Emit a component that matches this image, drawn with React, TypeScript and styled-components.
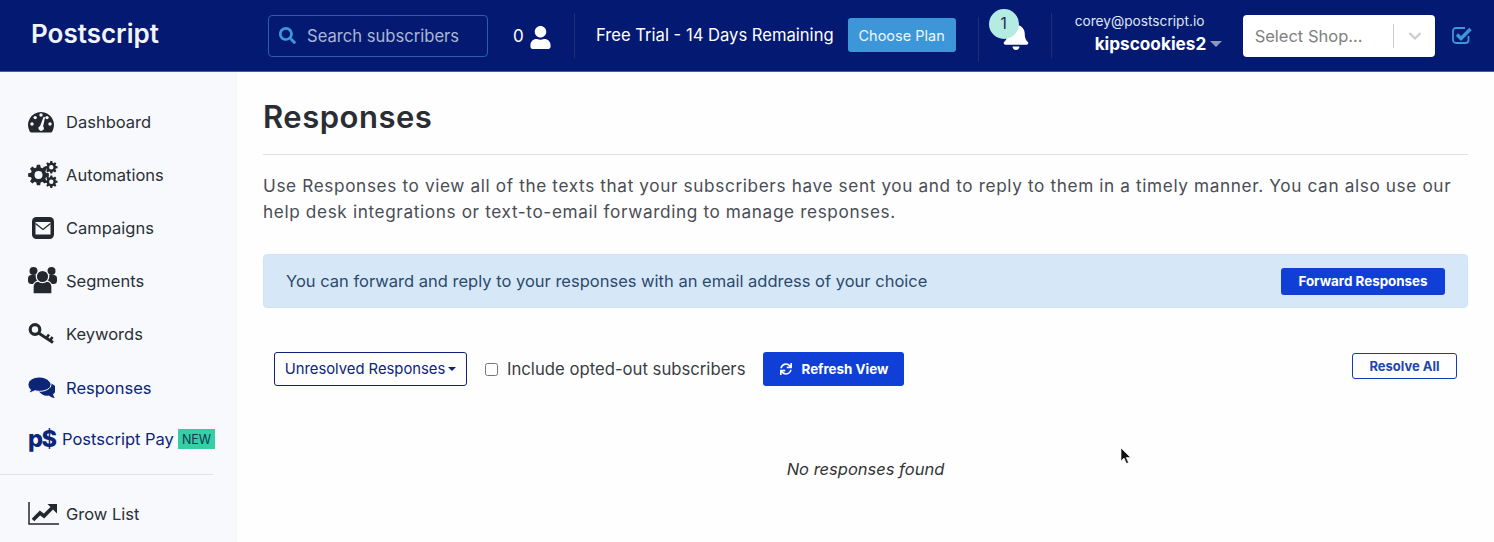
import React from 'react';
import styled, { createGlobalStyle } from 'styled-components';
import { FaBell, FaSearch, FaSync, FaUser } from 'react-icons/fa';

const GlobalStyle = createGlobalStyle`
  html, body {
    margin: 0;
    padding: 0;
    background: #fff;
    overflow: hidden;
  }
  body {
    font-family: Inter, "Liberation Sans", sans-serif;
    color: #212529;
  }
`;

const Page = styled.div`
  position: relative;
  width: 1494px;
  height: 542px;
  overflow: hidden;
`;

const Header = styled.header`
  box-sizing: border-box;
  height: 72px;
  display: flex;
  align-items: center;
  background: #041a72;
  border-bottom: 1px solid #3d62ad;
  color: #fff;
`;

const Logo = styled.div`
  width: 237px;
  padding-left: 31px;
  box-sizing: border-box;
  font-size: 26px;
  font-weight: 600;
  margin-top: -5px;
  color: #f2f4f9;
`;

const SearchBox = styled.div`
  box-sizing: border-box;
  width: 220px;
  height: 42px;
  margin-left: 31px;
  padding-left: 10px;
  display: flex;
  align-items: center;
  gap: 11px;
  border: 1px solid #2c5bb0;
  border-radius: 4px;
  color: #a9b6d6;
  font-size: 16.6px;
  svg {
    color: #3d9ad9;
    font-size: 17px;
  }
`;

const Count = styled.div`
  margin-left: 25px;
  width: 61px;
  display: flex;
  align-items: center;
  gap: 5px;
  font-size: 17px;
  svg {
    font-size: 23px;
    margin-top: 4px;
  }
`;

const Divider = styled.div<{ $left: number; $top?: number }>`
  width: 1px;
  height: 45px;
  margin-left: ${(p) => p.$left}px;
  margin-top: ${(p) => p.$top ?? 0}px;
  background: #1b3079;
`;

const Trial = styled.div`
  margin-left: 21px;
  font-size: 16.6px;
  white-space: nowrap;
  margin-top: -2px;
`;

const PlanButton = styled.div`
  margin-left: 14px;
  width: 108px;
  height: 34px;
  margin-top: -1px;
  border-radius: 3px;
  background: #3d96d8;
  color: #eef6fc;
  display: flex;
  align-items: center;
  justify-content: center;
  font-size: 14.5px;
`;

const BellWrap = styled.div`
  position: relative;
  width: 26px;
  margin-left: 23px;
  margin-top: 1px;
  font-size: 28px;
  line-height: 0;
`;

const BellBadge = styled.span`
  position: absolute;
  left: -13px;
  top: -13px;
  width: 30px;
  height: 30px;
  border-radius: 50%;
  background: #b4ebe2;
  color: #1c2a40;
  font-size: 15.5px;
  line-height: 29px;
  text-align: center;
`;

const Account = styled.div`
  width: 150px;
  margin-left: 23px;
  margin-top: -1px;
  white-space: nowrap;
`;

const Email = styled.div`
  font-size: 13.7px;
  line-height: 18px;
  color: #dfe5f3;
  margin-top: -3px;
`;

const ShopName = styled.div`
  display: flex;
  align-items: center;
  gap: 4px;
  margin-left: 20px;
  margin-top: 3px;
  font-size: 17.2px;
  line-height: 22px;
  font-weight: 700;
`;

const Caret = styled.span<{ $color: string; $size: number }>`
  display: inline-block;
  width: 0;
  height: 0;
  border-left: ${(p) => p.$size}px solid transparent;
  border-right: ${(p) => p.$size}px solid transparent;
  border-top: ${(p) => p.$size}px solid ${(p) => p.$color};
`;

const ShopSelect = styled.div`
  box-sizing: border-box;
  width: 192px;
  height: 42px;
  margin-left: 18px;
  background: #fff;
  border-radius: 4px;
  display: flex;
  align-items: center;
  color: #808080;
  font-size: 16.5px;
  padding-left: 12px;
`;

const ShopLabel = styled.span`
  width: 138px;
  white-space: nowrap;
`;

const ShopSeparator = styled.span`
  width: 1px;
  height: 24px;
  background: #cccccc;
`;

const ShopChevron = styled.svg`
  width: 14px;
  height: 10px;
  margin-left: 14px;
`;

const CheckIcon = styled.svg`
  width: 20px;
  height: 18px;
  margin-left: 17px;
  margin-top: -1px;
`;

const Body = styled.div`
  display: flex;
  height: 470px;
`;

const Sidebar = styled.nav`
  box-sizing: border-box;
  width: 237px;
  flex: none;
  background: #f7f9fd;
  padding-top: 23px;
`;

const NavItem = styled.div<{ $active?: boolean }>`
  height: 53px;
  display: flex;
  align-items: center;
  padding-left: 28px;
  font-size: 16.5px;
  color: ${(p) => (p.$active ? '#0c2577' : '#2b2f36')};
  margin-top: ${(p) => (p.$active ? 1 : 0)}px;
`;

const NavIcon = styled.span`
  width: 38px;
  flex: none;
  line-height: 0;
  color: #24272d;
`;

const NavGlyph = styled.svg<{ $w: number; $h: number; $left?: number }>`
  width: ${(p) => p.$w}px;
  height: ${(p) => p.$h}px;
  margin-left: ${(p) => p.$left ?? 0}px;
`;

const PayRow = styled.div`
  height: 47px;
  display: flex;
  align-items: center;
  padding-left: 28px;
  font-size: 16.5px;
  color: #0c2577;
  white-space: nowrap;
  margin-top: 1px;
`;

const PayLogo = styled.span`
  width: 34px;
  font-size: 23.5px;
  font-weight: 800;
  letter-spacing: -1.5px;
  color: #0c2577;
`;

const NewTag = styled.span`
  margin-left: 4px;
  padding: 0 4px;
  height: 20px;
  line-height: 21px;
  background: #35cfa3;
  color: #0e3a58;
  font-size: 12.5px;
`;

const SideRule = styled.div`
  width: 213px;
  height: 1px;
  background: #dfe3e8;
  margin: 12px 0;
`;

const Main = styled.main`
  box-sizing: border-box;
  flex: 1;
  padding: 23px 26px 0;
  background: #fefefe;
`;

const Title = styled.h1`
  margin: 0;
  height: 59px;
  border-bottom: 1px solid #dee2e6;
  font-size: 31px;
  letter-spacing: 0.5px;
  line-height: 44px;
  font-weight: 600;
  color: #2a2d33;
`;

const Intro = styled.p`
  margin: 18px 0 0;
  font-size: 17.2px;
  letter-spacing: 0.63px;
  line-height: 26px;
  color: #4a4d55;
`;

const Alert = styled.div`
  box-sizing: border-box;
  height: 54px;
  margin-top: 29px;
  padding: 0 22px;
  display: flex;
  align-items: center;
  justify-content: space-between;
  background: #d6e8f8;
  border: 1px solid #d0e3f5;
  border-radius: 4px;
  color: #2c4a6c;
  font-size: 16.5px;
`;

const PrimaryButton = styled.div<{ $width: number; $height: number }>`
  box-sizing: border-box;
  width: ${(p) => p.$width}px;
  height: ${(p) => p.$height}px;
  display: flex;
  align-items: center;
  justify-content: center;
  gap: 10px;
  background: #0f3fd6;
  border-radius: 3px;
  color: #fff;
  font-size: 13.4px;
  font-weight: 700;
  svg {
    font-size: 12px;
  }
`;

const Toolbar = styled.div`
  display: flex;
  align-items: center;
  height: 34px;
  margin-top: 44px;
  padding: 0 11px;
`;

const FilterButton = styled.div`
  box-sizing: border-box;
  width: 193px;
  height: 34px;
  display: flex;
  align-items: center;
  justify-content: center;
  gap: 3px;
  border: 1px solid #0c2577;
  border-radius: 3px;
  color: #0c2577;
  font-size: 14.8px;
`;

const CheckLabel = styled.label`
  margin: 0 18px;
  display: flex;
  align-items: center;
  gap: 9px;
  color: #3a3d44;
  font-size: 16.7px;
  white-space: nowrap;
`;

const CheckBox = styled.span`
  box-sizing: border-box;
  width: 13px;
  height: 13px;
  border: 1px solid #767676;
  border-radius: 2.5px;
  background: #fff;
`;

const ResolveButton = styled.div`
  box-sizing: border-box;
  width: 105px;
  height: 26px;
  margin-left: auto;
  align-self: flex-start;
  margin-top: 1px;
  display: flex;
  align-items: center;
  justify-content: center;
  border: 1px solid #0f3fae;
  border-radius: 3px;
  color: #1d45ae;
  font-size: 13px;
  font-weight: 700;
`;

const Empty = styled.div`
  margin-top: 73px;
  text-align: center;
  font-style: italic;
  font-size: 16.5px;
  color: #333;
  line-height: 20px;
`;

const Pointer = styled.svg`
  position: absolute;
  left: 1120px;
  top: 447px;
  width: 12px;
  height: 19px;
`;

// outline of a toothed gear with a round hole, for the automations icon
function gearPath(cx: number, cy: number, r: number, hole: number, teeth: number) {
  const inner = r * 0.74;
  const step = (Math.PI * 2) / teeth;
  const pts: string[] = [];
  for (let i = 0; i < teeth; i++) {
    const a = i * step;
    const corners: [number, number][] = [
      [inner, a - step * 0.36],
      [r, a - step * 0.2],
      [r, a + step * 0.2],
      [inner, a + step * 0.36],
    ];
    corners.forEach(([rad, ang]) => {
      pts.push(`${(cx + rad * Math.cos(ang)).toFixed(2)} ${(cy + rad * Math.sin(ang)).toFixed(2)}`);
    });
  }
  const ring = `M${cx - hole} ${cy}a${hole} ${hole} 0 1 0 ${hole * 2} 0a${hole} ${hole} 0 1 0 ${-hole * 2} 0z`;
  return `M${pts.join('L')}z${ring}`;
}

const GaugeIcon = () => (
  <NavGlyph $w={26} $h={22} viewBox="0 0 26 22">
    <path d="M3.4 21.5h19.2a2 2 0 0 0 1.7-1A13 13 0 1 0 1.7 20.5a2 2 0 0 0 1.7 1z" fill="currentColor" />
    <g fill="#f7f9fd">
      <circle cx="4" cy="13" r="1.7" />
      <circle cx="7.2" cy="6.6" r="1.7" />
      <circle cx="13" cy="4" r="1.7" />
      <circle cx="22" cy="13" r="1.7" />
      <circle cx="19" cy="6.6" r="1.7" />
      <path d="M15.6 5.8l1.5.5-2 9.2a2.6 2.6 0 1 1-3-.6z" />
    </g>
  </NavGlyph>
);

const CogsIcon = () => (
  <NavGlyph $w={30} $h={27} viewBox="0 0 30 27">
    <path fillRule="evenodd" fill="currentColor" d={gearPath(10.5, 14, 10.5, 4, 8)} />
    <path fillRule="evenodd" fill="currentColor" d={gearPath(23.3, 6.3, 6.3, 2.2, 8)} />
    <path fillRule="evenodd" fill="currentColor" d={gearPath(23.3, 20.7, 6.3, 2.2, 8)} />
  </NavGlyph>
);

const EnvelopeIcon = () => (
  <NavGlyph $w={22} $h={22} $left={4} viewBox="0 0 22 22">
    <rect width="22" height="22" rx="4.5" fill="currentColor" />
    <rect x="3.5" y="5" width="15" height="12.5" fill="#f7f9fd" />
    <path d="M3.5 6.5L11 12.5L18.5 6.5" fill="none" stroke="currentColor" strokeWidth="1.3" />
  </NavGlyph>
);

const UsersIcon = () => (
  <NavGlyph $w={29} $h={27} viewBox="0 0 29 27">
    <g fill="currentColor">
      <circle cx="5.5" cy="4" r="4" />
      <circle cx="23.5" cy="4" r="4" />
      <rect x="0" y="8" width="10" height="9" rx="3.5" />
      <rect x="19" y="8" width="10" height="9" rx="3.5" />
    </g>
    <g fill="currentColor" stroke="#f7f9fd" strokeWidth="1.3">
      <path d="M5 27V19a6 6 0 0 1 6-5h7a6 6 0 0 1 6 5v8z" />
      <circle cx="14.5" cy="9.5" r="6.2" />
    </g>
  </NavGlyph>
);

const KeyIcon = () => (
  <NavGlyph $w={26} $h={21} viewBox="0 0 26 21">
    <g fill="none" stroke="currentColor" strokeLinecap="butt">
      <circle cx="7" cy="6.5" r="4.8" strokeWidth="3.2" />
      <path d="M10.5 10L25 19.5" strokeWidth="3" />
      <path d="M18.5 15L21 11.5" strokeWidth="2.6" />
      <path d="M22 17.5L24.5 14" strokeWidth="2.6" />
    </g>
  </NavGlyph>
);

const CommentsIcon = () => (
  <NavGlyph $w={27} $h={21} viewBox="0 0 27 21">
    <g fill="#0c2577">
      <path d="M10 13a9 6.6 0 1 1 15 4.2c.3 1.5 1 2.8 1.8 3.8-2.3-.2-4.3-1-5.8-2.4-4 1-8.5-1-11-5.6z" />
    </g>
    <path
      d="M11.5 0C5.2 0 0 3.2 0 7.7c0 2 1 3.700 2.600 5-.4 1-1 1.900-1.900 2.800 2.100.1 4.200-.6 6-1.800 1.500.4 3 .6 4.800.6 6.300 0 11.500-3 11.500-6.600S17.800 0 11.500 0z"
      fill="#0c2577"
      stroke="#f7f9fd"
      strokeWidth="1"
    />
  </NavGlyph>
);

const ChartIcon = () => (
  <NavGlyph $w={31} $h={23} viewBox="0 0 31 23">
    <path d="M1 0V22H31" fill="none" stroke="currentColor" strokeWidth="1.5" />
    <path d="M5 18L12 11L16 14L24 6" fill="none" stroke="currentColor" strokeWidth="3.6" />
    <path d="M19.500 2H29V11.500z" fill="currentColor" />
  </NavGlyph>
);

const navTop = [
  { label: 'Dashboard', icon: <GaugeIcon /> },
  { label: 'Automations', icon: <CogsIcon /> },
  { label: 'Campaigns', icon: <EnvelopeIcon /> },
  { label: 'Segments', icon: <UsersIcon /> },
  { label: 'Keywords', icon: <KeyIcon /> },
];

export default function App() {
  return (
    <Page>
      <GlobalStyle />
      <Header>
        <Logo>Postscript</Logo>
        <SearchBox>
          <FaSearch />
          Search subscribers
        </SearchBox>
        <Count>
          0 <FaUser />
        </Count>
        <Divider $left={0} />
        <Trial>Free Trial - 14 Days Remaining</Trial>
        <PlanButton>Choose Plan</PlanButton>
        <Divider $left={22} $top={8} />
        <BellWrap>
          <FaBell />
          <BellBadge>1</BellBadge>
        </BellWrap>
        <Divider $left={23} />
        <Account>
          <Email>corey@postscript.io</Email>
          <ShopName>
            kipscookies2 <Caret $color="#8d98bd" $size={6} />
          </ShopName>
        </Account>
        <ShopSelect>
          <ShopLabel>Select Shop...</ShopLabel>
          <ShopSeparator />
          <ShopChevron viewBox="0 0 14 10">
            <path d="M1.5 2 L7 7.5 L12.5 2" fill="none" stroke="#cccccc" strokeWidth="2.2" />
          </ShopChevron>
        </ShopSelect>
        <CheckIcon viewBox="0 0 20 18">
          <path
            d="M16.500 10V14a3 3 0 0 1-3 3H4a3 3 0 0 1-3-3V5a3 3 0 0 1 3-3H13"
            fill="none"
            stroke="#3d96d8"
            strokeWidth="1.8"
          />
          <path d="M5 8.500L9 12.500L18.500 3" fill="none" stroke="#3d96d8" strokeWidth="3.4" />
        </CheckIcon>
      </Header>
      <Body>
        <Sidebar>
          {navTop.map((item) => (
            <NavItem key={item.label}>
              <NavIcon>{item.icon}</NavIcon>
              {item.label}
            </NavItem>
          ))}
          <NavItem $active>
            <NavIcon>
              <CommentsIcon />
            </NavIcon>
            Responses
          </NavItem>
          <PayRow>
            <PayLogo>p$</PayLogo>
            Postscript Pay
            <NewTag>NEW</NewTag>
          </PayRow>
          <SideRule />
          <NavItem>
            <NavIcon>
              <ChartIcon />
            </NavIcon>
            Grow List
          </NavItem>
        </Sidebar>
        <Main>
          <Title>Responses</Title>
          <Intro>
            Use Responses to view all of the texts that your subscribers have sent you and to reply to them in a timely
            manner. You can also use our help desk integrations or text-to-email forwarding to manage responses.
          </Intro>
          <Alert>
            You can forward and reply to your responses with an email address of your choice
            <PrimaryButton $width={164} $height={27}>
              Forward Responses
            </PrimaryButton>
          </Alert>
          <Toolbar>
            <FilterButton>
              Unresolved Responses <Caret $color="#0c2577" $size={4} />
            </FilterButton>
            <CheckLabel>
              <CheckBox />
              Include opted-out subscribers
            </CheckLabel>
            <PrimaryButton $width={141} $height={34}>
              <FaSync />
              Refresh View
            </PrimaryButton>
            <ResolveButton>Resolve All</ResolveButton>
          </Toolbar>
          <Empty>No responses found</Empty>
        </Main>
      </Body>
      <Pointer viewBox="0 0 12 19">
        <path d="M1 1 L1 14 L4 11 L6.500 16.500 L8.500 15.500 L6.200 10.500 L10.500 10.500 Z" fill="#111" stroke="#fff" strokeWidth="0.6" />
      </Pointer>
    </Page>
  );
}
